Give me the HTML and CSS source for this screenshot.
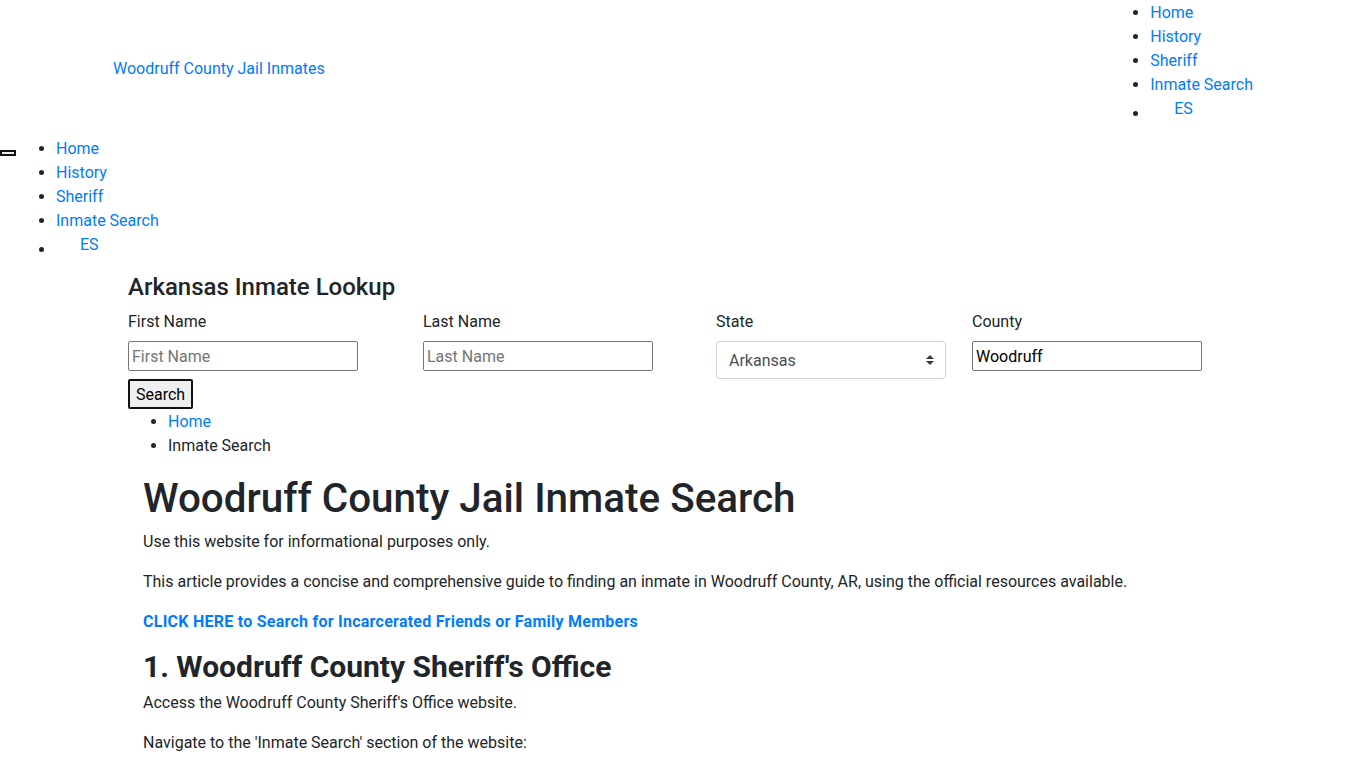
FILE: index.html
```html
<!DOCTYPE html>
<html lang="en">
<head>
<meta charset="utf-8">
<title>Woodruff County Jail Inmate Search</title>
<link rel="stylesheet" href="styles.css">
</head>
<body>
<header class="topbar">
  <a class="brand" href="#">Woodruff County Jail Inmates</a>
  <ul class="menu menu-top">
    <li><a href="#">Home</a></li>
    <li><a href="#">History</a></li>
    <li><a href="#">Sheriff</a></li>
    <li><a href="#">Inmate Search</a></li>
    <li class="lang"><a class="lang-link" href="#">ES</a></li>
  </ul>
</header>

<nav class="mobile-nav">
  <button class="toggler" type="button" aria-label="Menu"></button>
  <ul class="menu menu-side">
    <li><a href="#">Home</a></li>
    <li><a href="#">History</a></li>
    <li><a href="#">Sheriff</a></li>
    <li><a href="#">Inmate Search</a></li>
    <li class="lang"><a class="lang-link" href="#">ES</a></li>
  </ul>
</nav>

<main class="container">
  <h4 class="lookup-title">Arkansas Inmate Lookup</h4>
  <form class="lookup">
    <div class="fields">
      <div class="field">
        <label class="label" for="fn">First Name</label>
        <input class="text-input" id="fn" type="text" placeholder="First Name">
      </div>
      <div class="field">
        <label class="label" for="ln">Last Name</label>
        <input class="text-input" id="ln" type="text" placeholder="Last Name">
      </div>
      <div class="field">
        <label class="label" for="st">State</label>
        <div class="select-wrap">
          <select class="select" id="st"><option>Arkansas</option></select>
          <svg class="select-arrow" width="8" height="10" viewBox="0 0 4 5"><path d="M2 0L0 2h4zm0 5L0 3h4z" fill="#343a40"/></svg>
        </div>
      </div>
      <div class="field">
        <label class="label" for="co">County</label>
        <input class="text-input" id="co" type="text" value="Woodruff">
      </div>
    </div>
    <div class="actions"><button class="search-btn" type="button">Search</button></div>
  </form>

  <ul class="crumbs">
    <li><a href="#">Home</a></li>
    <li>Inmate Search</li>
  </ul>

  <article class="content">
    <h1 class="page-title">Woodruff County Jail Inmate Search</h1>
    <p>Use this website for informational purposes only.</p>
    <p>This article provides a concise and comprehensive guide to finding an inmate in Woodruff County, AR, using the official resources available.</p>
    <p><a class="cta" href="#">CLICK HERE to Search for Incarcerated Friends or Family Members</a></p>
    <h2 class="section-title">1. Woodruff County Sheriff's Office</h2>
    <p>Access the Woodruff County Sheriff's Office website.</p>
    <p>Navigate to the 'Inmate Search' section of the website:</p>
  </article>
</main>
</body>
</html>
```
FILE: styles.css
```css
html, body {
  margin: 0;
  padding: 0;
}
body {
  font-family: Roboto, "Liberation Sans", Arial, sans-serif;
  font-size: 16px;
  line-height: 24px;
  color: #212529;
  background: #fff;
}
a {
  color: #007bff;
  text-decoration: none;
}

/* top header */
.topbar {
  width: 1140px;
  height: 136px;
  margin: 0 auto;
  display: flex;
  justify-content: space-between;
}
.brand {
  align-self: center;
  padding-top: 2px;
}
.menu {
  margin: 0;
  padding-left: 40px;
  list-style: disc;
}
.menu-top {
  align-self: flex-start;
  padding-top: 1px;
}
.lang-link {
  display: inline-block;
  padding-left: 24px;
  vertical-align: 5px;
}

/* collapsed nav */
.mobile-nav {
  display: flex;
  align-items: flex-start;
}
.toggler {
  width: 16px;
  height: 6px;
  margin-top: 14px;
  padding: 0;
  border: 2px solid #111;
  background: #efefef;
}
.menu-side {
  margin-bottom: 10px;
  padding-top: 1px;
}

/* lookup form */
.container {
  width: 1110px;
  margin: 0 auto;
  padding: 0 15px;
}
.lookup-title {
  margin: 0 0 8px;
  padding-top: 1px;
  font-size: 24px;
  line-height: 28px;
  font-weight: 500;
}
.fields {
  display: grid;
  grid-template-columns: 295px 293px 256px 230px;
  align-items: start;
}
.field {
  display: flex;
  flex-direction: column;
  align-items: flex-start;
}
.label {
  margin-bottom: 8px;
  padding-top: 1px;
  line-height: 23px;
}
.text-input {
  box-sizing: border-box;
  width: 230px;
  height: 30px;
  padding: 1px 3px;
  border: 1px solid #767676;
  border-radius: 2px;
  font-family: inherit;
  font-size: 16px;
  color: #000;
  background: #fff;
}
.text-input::placeholder {
  color: #757575;
}
.select-wrap {
  position: relative;
  width: 230px;
}
.select {
  box-sizing: border-box;
  width: 230px;
  height: 38px;
  padding: 6px 28px 6px 12px;
  border: 1px solid #ced4da;
  border-radius: 4px;
  font-family: inherit;
  font-size: 16px;
  color: #495057;
  background: #fff;
  -webkit-appearance: none;
  appearance: none;
}
.select-arrow {
  position: absolute;
  right: 12px;
  top: 14px;
  pointer-events: none;
}
.actions {
  display: flex;
}
.search-btn {
  box-sizing: border-box;
  height: 30px;
  padding: 1px 6px;
  border: 2px solid #111;
  border-radius: 2px;
  background: #efefef;
  font-family: inherit;
  font-size: 16px;
  color: #000;
}

/* breadcrumb */
.crumbs {
  box-sizing: border-box;
  margin: 0 0 16px;
  padding-left: 40px;
  padding-top: 1px;
  height: 48px;
}

/* article */
.content {
  padding: 0 15px;
}
.page-title {
  margin: 0 0 8px;
  padding-top: 4px;
  font-size: 40.4px;
  line-height: 44px;
  font-weight: 500;
}
.content p {
  margin: 0 0 16px;
  padding-top: 1px;
  line-height: 23px;
}
.cta {
  font-weight: 700;
  letter-spacing: 0.25px;
}
.section-title {
  margin: 0 0 8px;
  padding-top: 3px;
  font-size: 30px;
  line-height: 30px;
  font-weight: 700;
}
```
